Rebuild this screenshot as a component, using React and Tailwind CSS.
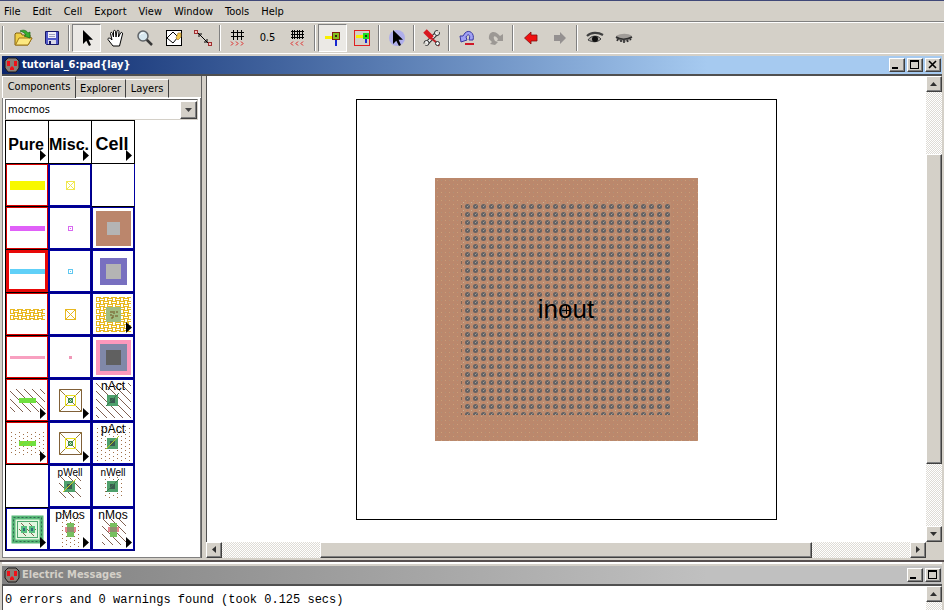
import React from "react";

const MENUS = ["File", "Edit", "Cell", "Export", "View", "Window", "Tools", "Help"];
const RAISED =
  "border border-t-white border-l-white border-r-[#404040] border-b-[#404040] bg-[#d4d0c8] shadow-[inset_-1px_-1px_0_#808080]";
const TRACK =
  "bg-[repeating-conic-gradient(#dedbd5_0_25%,#ffffff_0_50%)] bg-[length:2px_2px]";

function Separator() {
  return <div className="mx-[2px] my-[2px] w-[2px] self-stretch border-l border-[#808080] border-r border-r-white" />;
}

function Tool({ label, pressed, wide, children }) {
  return (
    <button
      type="button"
      aria-label={label}
      className={
        "flex h-[28px] shrink-0 items-center justify-center " +
        (wide ? "w-[31px] " : "w-[29px] ") +
        (pressed
          ? "border border-t-[#808080] border-l-[#808080] border-r-white border-b-white bg-[#ebe9e5]"
          : "")
      }
    >
      {children}
    </button>
  );
}

function Icon({ children }) {
  return (
    <svg width="20" height="20" viewBox="0 0 20 20" className="shrink-0" aria-hidden="true">
      {children}
    </svg>
  );
}

function GridIcon({ dense }) {
  const lines = dense ? [4, 6, 9, 11, 14] : [5, 9, 13];
  const rows = dense ? [3, 6, 9] : [4, 8];
  const chevron = dense ? "l-2 2 l2 2" : "l2 2 l-2 2";
  return (
    <Icon>
      <g fill="#000">
        {lines.map((x) => (
          <rect key={x} x={x} y="2" width="1" height={dense ? 9 : 10} />
        ))}
        {rows.map((y) => (
          <rect key={y} x="3" y={y} width="13" height="1" />
        ))}
      </g>
      <g stroke="#e02020" fill="none">
        {[4, 9, 14].map((x) => (
          <path key={x} d={`M${dense ? x + 1 : x - 1} 13.5${chevron}`} />
        ))}
      </g>
    </Icon>
  );
}

function PointerShape() {
  return <path d="M6 2V16L9.3 12.8L12 18L14 17L11.6 11.8H16Z" fill="#000" />;
}

function OutletLogo() {
  return (
    <svg width="16" height="16" viewBox="0 0 16 16" className="shrink-0" aria-hidden="true">
      <path d="M4 1H12L15 4V11L12 15H4L1 11V4Z" fill="#8a8078" stroke="#1a1a1a" />
      <rect x="3" y="4" width="3" height="5" fill="#f01018" />
      <rect x="10" y="4" width="3" height="5" fill="#f01018" />
      <path d="M6 13V11L8 9L10 11V13Z" fill="#f01018" />
    </svg>
  );
}

function WindowButton({ label, children }) {
  return (
    <button type="button" aria-label={label} className={"h-[14px] w-[16px] " + RAISED}>
      <svg width="14" height="12" viewBox="0 0 14 12" aria-hidden="true">
        {children}
      </svg>
    </button>
  );
}

function Minimize() {
  return (
    <WindowButton label="Minimize">
      <rect x="2" y="8" width="6" height="2" />
    </WindowButton>
  );
}

function Maximize() {
  return (
    <WindowButton label="Maximize">
      <path d="M2 1H11V10H2ZM3 3V9H10V3Z" fillRule="evenodd" />
    </WindowButton>
  );
}

const ARROWS = {
  up: "M3 9H10L6.5 5Z",
  down: "M3 5H10L6.5 9Z",
  left: "M9 3V10L5 6.5Z",
  right: "M5 3V10L9 6.5Z",
};

function ArrowButton({ dir, label }) {
  return (
    <button type="button" aria-label={label} className={"h-[16px] w-[16px] shrink-0 " + RAISED}>
      <svg width="14" height="14" viewBox="0 0 14 14" aria-hidden="true">
        <path d={ARROWS[dir]} fill="#303030" />
      </svg>
    </button>
  );
}

/* ---- palette drawings, each on a 42 x 42 field ---- */

function Label({ size = 12, children }) {
  return (
    <text x="21" y="11" textAnchor="middle" fontSize={size} fill="#000">
      {children}
    </text>
  );
}

function Flyout() {
  return <path d="M34 29V40L40 34.5Z" fill="#000" />;
}

function Arc({ y, h, color }) {
  return <rect x="4" y={y} width="35" height={h} fill={color} />;
}

function Pin({ at, size, color, cross }) {
  const end = at + size;
  return (
    <g stroke={color} fill="none">
      <rect x={at + 0.5} y={at + 0.5} width={size - 1} height={size - 1} />
      {cross ? (
        <path d={`M${at} ${at}L${end} ${end}M${end} ${at}L${at} ${end}`} />
      ) : (
        <rect x={at + 2} y={at + 2} width="1" height="1" stroke="none" fill={color} />
      )}
    </g>
  );
}

function Nested({ boxes }) {
  return boxes.map(([at, size, color]) => (
    <rect key={at} x={at} y={at} width={size} height={size} fill={color} />
  ));
}

function Fill({ id, x = 4, y = 4, w = 35, h = 35 }) {
  return <rect x={x} y={y} width={w} height={h} fill={`url(#${id})`} />;
}

function Contact({ stripe }) {
  return (
    <g>
      <rect x="15" y="16" width="11" height="11" fill="#4fa06c" />
      <rect x="18" y="19" width="5" height="5" fill="#3a5a50" />
      <path d="M14 27L27 14" stroke={stripe} />
    </g>
  );
}

function WellPin() {
  return (
    <g fill="none">
      <rect x="10.5" y="10.5" width="22" height="22" stroke="#806038" />
      <path d="M10 10L33 33M33 10L10 33" stroke="#9c8040" />
      <rect x="16.5" y="16.5" width="10" height="10" stroke="#e8e020" />
      <rect x="19.5" y="19.5" width="4" height="4" stroke="#408850" fill="#c8e8b0" />
      <path d="M19 19L24 24M24 19L19 24" stroke="#408850" />
    </g>
  );
}

function Transistor() {
  return (
    <g>
      <rect x="18" y="15" width="7" height="14" fill="#78c060" />
      <rect x="16" y="19" width="11" height="5" fill="#e88890" />
      <rect x="18" y="19" width="7" height="5" fill="#909070" />
    </g>
  );
}

const poly = "#e8b820";

const CELLS = [
  { kind: "head", name: "Pure", size: 16 },
  { kind: "head", name: "Misc.", size: 16 },
  { kind: "head", name: "Cell", size: 18 },
  { kind: "arc", name: "Metal-3 arc", art: <Arc y={17} h={9} color="#f8f800" /> },
  { kind: "node", name: "Metal-3 pin", art: <Pin at={17} size={9} color="#f0e850" cross /> },
  { kind: "none", name: "" },
  { kind: "arc", name: "Metal-2 arc", art: <Arc y={19} h={5} color="#e060f8" /> },
  { kind: "node", name: "Metal-2 pin", art: <Pin at={19} size={5} color="#d868f0" /> },
  { kind: "node", name: "Metal contact", art: <Nested boxes={[[4, 35, "#bb866c"], [15, 13, "#b4b4b4"]]} /> },
  { kind: "current", name: "Metal-1 arc", art: <Arc y={19} h={5} color="#60d0f8" /> },
  { kind: "node", name: "Metal-1 pin", art: <Pin at={19} size={5} color="#60c8f0" /> },
  { kind: "node", name: "Metal-2 contact", art: <Nested boxes={[[8, 27, "#7870c0"], [14, 15, "#b4b4b4"]]} /> },
  { kind: "arc", name: "Poly arc", art: <Fill id="brick" y={16} h={11} /> },
  { kind: "node", name: "Poly pin", art: <Pin at={16} size={11} color={poly} cross /> },
  {
    kind: "node",
    name: "Poly contact",
    art: (
      <>
        <Fill id="brick" />
        <rect x="14" y="14" width="15" height="15" fill="#a0bc80" />
        <path d="M18 19H21M22 18V21M24 19H26M18 22H20M21 22V25M23 23H26M19 25H21" stroke="#705020" />
        <Flyout />
      </>
    ),
  },
  { kind: "arc", name: "Poly-2 arc", art: <Arc y={20} h={3} color="#f8a0c0" /> },
  { kind: "node", name: "Poly-2 pin", art: <rect x="20" y="20" width="3" height="3" fill="#f098b8" /> },
  {
    kind: "node",
    name: "Poly-2 contact",
    art: <Nested boxes={[[4, 35, "#fc98bc"], [8, 27, "#8088a8"], [14, 15, "#606060"]]} />,
  },
  {
    kind: "arc",
    name: "N active arc",
    art: (
      <>
        <Fill id="diag" y={10} h={23} />
        <rect x="13" y="19" width="17" height="5" fill="#70e040" />
        <Flyout />
      </>
    ),
  },
  { kind: "node", name: "N active pin", art: <><WellPin /><Flyout /></> },
  { kind: "node", name: "N active contact", art: <><Fill id="diag" /><Contact stripe="#3a7850" /><Label>nAct</Label></> },
  {
    kind: "arc",
    name: "P active arc",
    art: (
      <>
        <Fill id="dots" y={10} h={23} />
        <rect x="13" y="19" width="17" height="5" fill="#70e040" />
        <path d="M13 24L18 19M21 24L26 19" stroke="#a0d020" />
        <Flyout />
      </>
    ),
  },
  { kind: "node", name: "P active pin", art: <><WellPin /><Flyout /></> },
  { kind: "node", name: "P active contact", art: <><Fill id="dots" /><Contact stripe="#b0c820" /><Label>pAct</Label></> },
  { kind: "none", name: "" },
  {
    kind: "node",
    name: "P well contact",
    art: <><Fill id="diag" x={10} y={11} w={22} h={22} /><Contact stripe="#d0d020" /><Label size={10}>pWell</Label></>,
  },
  {
    kind: "node",
    name: "N well contact",
    art: <><Fill id="dots" x={10} y={11} w={22} h={22} /><Contact stripe="#3a7850" /><Label size={10}>nWell</Label></>,
  },
  {
    kind: "node",
    name: "NPN transistor",
    art: (
      <>
        <rect x="7.5" y="9.5" width="28" height="24" fill="#e4f8e0" stroke="#58b878" strokeWidth="4" />
        <rect x="7.5" y="9.5" width="28" height="24" fill="none" stroke="#306850" strokeDasharray="2 2" />
        <rect x="11.5" y="13.5" width="20" height="16" fill="none" stroke="#50a870" />
        <Fill id="diag" x={13} y={15} w={17} h={13} />
        <rect x="15" y="18" width="6" height="7" fill="#58c080" />
        <rect x="23" y="18" width="6" height="7" fill="#58c080" />
        <rect x="17" y="20" width="2" height="3" fill="#306878" />
        <rect x="25" y="20" width="2" height="3" fill="#306878" />
        <Flyout />
      </>
    ),
  },
  { kind: "node", name: "P transistor", art: <><Fill id="dots" x={10} w={22} /><Transistor /><Label>pMos</Label><Flyout /></> },
  { kind: "node", name: "N transistor", art: <><Fill id="diag" x={10} y={11} w={24} h={26} /><Transistor /><Label>nMos</Label><Flyout /></> },
];

const EDGE = {
  head: "",
  none: "",
  arc: "border border-[#d80000]",
  node: "border border-[#0000a0]",
  current: "border-[3px] border-[#e80808]",
};

const OUTER = {
  head: "border-black",
  none: "border-r-[#0000a0] border-b-black",
  arc: "border-r-[#0000a0] border-b-black",
  node: "border-[#000080]",
  current: "border-r-[#0000a0] border-b-black",
};

function PaletteCell({ cell }) {
  const drawing =
    cell.kind === "head" ? (
      <>
        <text x="20" y="29" textAnchor="middle" fontSize={cell.size} fontWeight="bold">
          {cell.name}
        </text>
        <Flyout />
      </>
    ) : (
      cell.art
    );
  return (
    <button
      type="button"
      aria-label={cell.name || "Empty"}
      className={"grid h-[43px] w-[43px] border-r border-b bg-white " + OUTER[cell.kind]}
    >
      <svg
        width="42"
        height="42"
        viewBox="0 0 42 42"
        className="col-start-1 row-start-1 font-['Liberation_Sans',Arial,sans-serif]"
      >
        {drawing}
      </svg>
      <span className={"col-start-1 row-start-1 h-[42px] w-[42px] " + EDGE[cell.kind]} />
    </button>
  );
}

function PatternDefs() {
  return (
    <svg width="0" height="0" className="absolute" aria-hidden="true">
      <defs>
        <pattern id="diag" width="8" height="8" patternUnits="userSpaceOnUse">
          <path d="M-1 -1L9 9M7 -1L9 1M-1 7L1 9" stroke="#806050" strokeWidth="1" />
        </pattern>
        <pattern id="dots" width="8" height="4" patternUnits="userSpaceOnUse">
          <rect x="1" y="0" width="1" height="1" fill="#a07048" />
          <rect x="5" y="2" width="1" height="1" fill="#a07048" />
        </pattern>
        <pattern id="brick" x="4" y="4" width="8" height="6" patternUnits="userSpaceOnUse">
          <path d="M0.5 0V5M3.5 0V5M0 0.5H4M0 4.5H4M4.5 3V6M7.5 3V6M4.5 0V2M7.5 0V2M4 1.5H8M4 3.5H8" stroke={poly} fill="none" />
        </pattern>
        <pattern id="weave" width="8" height="8" patternUnits="userSpaceOnUse">
          <rect width="8" height="8" fill="#bb886c" />
          <rect x="1" y="1" width="1" height="1" fill="#cca078" />
          <rect x="5" y="5" width="1" height="1" fill="#cca078" />
          <rect x="5" y="1" width="1" height="1" fill="#b09078" />
          <rect x="1" y="5" width="1" height="1" fill="#b09078" />
        </pattern>
        <pattern id="vias" x="107" y="103" width="8" height="8" patternUnits="userSpaceOnUse">
          <rect width="8" height="8" fill="#bc8c70" />
          <rect x="0" y="0" width="1" height="1" fill="#c8b498" />
          <rect x="0" y="4" width="1" height="1" fill="#c88058" />
          <rect x="4" y="0" width="1" height="1" fill="#c88058" />
          <circle cx="4.5" cy="4.5" r="2.5" fill="#646264" />
          <rect x="4" y="4" width="1" height="1" fill="#a8a498" />
          <rect x="5" y="3" width="1" height="1" fill="#88847c" />
        </pattern>
      </defs>
    </svg>
  );
}

function PadLayout() {
  return (
    <svg width="421" height="421" viewBox="0 0 421 421" className="shrink-0 font-['Liberation_Sans',Arial,sans-serif]">
      <rect x="0.5" y="0.5" width="420" height="420" fill="none" stroke="#000" />
      <rect x="79" y="79" width="263" height="263" fill="url(#weave)" />
      <rect x="107" y="103" width="208" height="213" fill="url(#vias)" />
      <path d="M105.5 106V316" stroke="#806858" strokeDasharray="3 5" />
      <text x="210" y="219" textAnchor="middle" fontSize="26" fill="#000">
        inout
      </text>
      <path d="M206 211.5H214M210.5 207V215" stroke="#000" />
    </svg>
  );
}

function TitleBar({ children, active, buttons }) {
  return (
    <div
      className={
        "flex h-[18px] shrink-0 items-center pl-[2px] pr-px text-[11px] font-bold " +
        (active
          ? "bg-linear-to-r from-[#0a246a] to-[#a6caf0] to-75% text-white"
          : "bg-linear-to-r from-[#808080] to-[#c0c0c0] to-75% text-[#d4d0c8]")
      }
    >
      <OutletLogo />
      <h2 className="ml-[2px] flex-1 leading-[16px]">{children}</h2>
      <div className="flex gap-[2px]">{buttons}</div>
    </div>
  );
}

export default function App() {
  return (
    <div className="flex h-screen flex-col overflow-hidden bg-[#d4d0c8] font-['DejaVu_Sans_Condensed','DejaVu_Sans',sans-serif] text-[11px] leading-[14px] text-black">
      <PatternDefs />
      <nav className="flex h-[22px] shrink-0 items-center gap-[12px] border-t border-b border-t-[#404878] border-b-[#808080] px-1 pt-px">
        {MENUS.map((m) => (
          <button type="button" key={m}>
            {m}
          </button>
        ))}
      </nav>

      <div className="flex h-[32px] shrink-0 items-center border-t border-b border-white" role="toolbar">
        <div className="mr-[4px] ml-[2px] h-[24px] w-[2px] border-l border-r border-l-[#808080] border-r-white" />
        <Tool label="Open">
          <Icon>
            <path d="M2 8V17H15L19 10H17V7H9L8 5H3L2 6Z" fill="#f0d048" stroke="#806010" />
            <path d="M2.5 17L6 10H19L15 17Z" fill="#fce880" stroke="#a07818" />
            <path d="M7 3C11 1 14 3 15 5L17 4V10L11 8L13 7C12 5 10 4 7 3Z" fill="#38b030" stroke="#186818" strokeWidth=".7" />
          </Icon>
        </Tool>
        <Tool label="Save">
          <Icon>
            <path d="M3.5 3.5H16.5V16.5H4.5L3.5 15.5Z" fill="#5058c8" stroke="#181868" />
            <rect x="6" y="4" width="8" height="6" fill="#f0f0f8" />
            <path d="M7 6.5H13M7 8.5H13" stroke="#a0a0c0" />
            <rect x="6" y="12" width="8" height="4" fill="#d8d8e8" />
            <rect x="7" y="13" width="2" height="3" fill="#181868" />
          </Icon>
        </Tool>
        <Separator />
        <Tool label="Select" pressed>
          <Icon><PointerShape /></Icon>
        </Tool>
        <Tool label="Pan">
          <Icon>
            <path
              d="M7 18L2 11.5C1.5 10 3.5 9.5 5 11L6 12L4.5 5.5C4.5 4 6 4 6.5 5.5L7.5 9L7.5 3.5C7.5 2 9.5 2 9.5 3.5L10 9L11 3C11.5 1.8 13 2.2 13 3.5L12.5 9L14.5 5C15.5 3.8 16.8 4.6 16.5 6L15 12L13.5 18Z"
              fill="#fff" stroke="#000"
            />
          </Icon>
        </Tool>
        <Tool label="Zoom">
          <Icon>
            <path d="M11 11L17 17" stroke="#383838" strokeWidth="2.5" />
            <circle cx="8" cy="8" r="5" fill="#d8e8f0" stroke="#606468" strokeWidth="1.5" />
            <path d="M5 7C6 5 8 5 9 5" stroke="#fff" fill="none" />
          </Icon>
        </Tool>
        <Tool label="Outline edit">
          <Icon>
            <rect x="2.5" y="2.5" width="15" height="15" fill="#fff" stroke="#000" />
            <path d="M9 4L14 9L9 15L3 10Z" fill="none" stroke="#000" />
            <path d="M12 10L14 5H17V9L14 12Z" fill="#f0c850" stroke="#a88030" strokeWidth=".7" />
          </Icon>
        </Tool>
        <Tool label="Measure">
          <Icon>
            <path d="M4 4L16 16M6 9V6H9M11 14H14V11" fill="none" stroke="#000" />
            <rect x="1.5" y="2.5" width="3" height="3" fill="#f0c0c0" stroke="#a03030" />
            <rect x="15.5" y="14.5" width="3" height="3" fill="#f0c0c0" stroke="#a03030" />
          </Icon>
        </Tool>
        <Separator />
        <Tool label="Grid larger"><GridIcon /></Tool>
        <Tool label="Grid alignment" wide>0.5</Tool>
        <Tool label="Grid smaller"><GridIcon dense /></Tool>
        <Separator />
        <Tool label="Select objects" pressed>
          <Icon>
            <rect x="2" y="8" width="8" height="3" fill="#f8f000" />
            <rect x="12" y="12" width="2" height="6" fill="#1828d0" />
            <rect x="9.5" y="4.5" width="7" height="7" fill="#80c020" stroke="#802010" />
            <rect x="12" y="7" width="2" height="2" fill="#302010" />
          </Icon>
        </Tool>
        <Tool label="Select area">
          <Icon>
            <rect x="2.5" y="2.5" width="15" height="15" fill="none" stroke="#e02020" />
            <rect x="4" y="7" width="8" height="3" fill="#f8f000" />
            <rect x="13" y="10" width="2" height="5" fill="#1828d0" />
            <rect x="11" y="5" width="6" height="6" fill="#20e020" />
            <rect x="13" y="7" width="2" height="2" fill="#104010" />
          </Icon>
        </Tool>
        <Separator />
        <Tool label="Toggle special select">
          <Icon>
            <circle cx="10" cy="10" r="8" fill="#a8a8f0" opacity=".85" />
            <PointerShape />
          </Icon>
        </Tool>
        <Separator />
        <Tool label="Preferences">
          <Icon>
            <path d="M5 15L15 5" stroke="#303030" strokeWidth="4" />
            <path d="M5 15L15 5" stroke="#f4f4f4" strokeWidth="2" />
            <circle cx="4.5" cy="15" r="2.5" fill="#f4f4f4" stroke="#303030" />
            <circle cx="15" cy="5" r="2.5" fill="#f4f4f4" stroke="#303030" />
            <path d="M15 5L19 1M4.5 15L1 18" stroke="#d4d0c8" strokeWidth="2" />
            <path d="M3 3L10 10" stroke="#d81820" strokeWidth="5" />
            <path d="M9 10L15 15L17 18" stroke="#c02028" strokeWidth="2" fill="none" />
            <circle cx="15.5" cy="15.5" r="2" fill="#f4f4f4" stroke="#303030" />
          </Icon>
        </Tool>
        <Separator />
        <Tool label="Undo">
          <Icon>
            <path d="M16 12C18 5 12 1 8 5L6 8H3L4 14L10 12L9 9C11 5 14 7 12 12Z" fill="#a0a0f4" stroke="#3838a0" />
            <rect x="8" y="15" width="9" height="2" fill="#d01828" />
          </Icon>
        </Tool>
        <Tool label="Redo">
          <Icon>
            <path d="M3 11C2 4 8 2 12 6L14 8L17 6V13H11L12 11C9 7 7 8 8 11L9 13L12 14L9 17L4 16L6 14Z" fill="#9c9894" />
          </Icon>
        </Tool>
        <Separator />
        <Tool label="Back">
          <Icon>
            <path d="M3.5 10L10 4V7H16V13H10V16Z" fill="#f01010" stroke="#801010" strokeWidth=".8" />
          </Icon>
        </Tool>
        <Tool label="Forward">
          <Icon>
            <path d="M16 10L10 4V7H4V13H10V16Z" fill="#949090" />
          </Icon>
        </Tool>
        <Separator />
        <Tool label="Expand">
          <Icon>
            <path d="M2 8C6 4 13 4 18 7" stroke="#404040" strokeWidth="2.2" fill="none" />
            <path d="M3 12C6 7 13 7 16 11C12 15 7 14 3 12Z" fill="#a8a4a0" stroke="#404040" />
            <circle cx="10" cy="11" r="3" fill="#101010" />
          </Icon>
        </Tool>
        <Tool label="Unexpand">
          <Icon>
            <path d="M2 8C7 5 14 5 18 8L17 12C12 15 6 14 2 11Z" fill="#a09c98" />
            <path d="M2 9C6 12 13 12 18 9M4 11L3 13M7 12V14M10 12V15M13 12L14 14M16 11L17 12" stroke="#303030" strokeWidth="1.6" fill="none" />
          </Icon>
        </Tool>
      </div>

      <section className="flex min-h-0 flex-1 flex-col px-[2px] pt-[2px] pb-[2px]">
        <TitleBar
          active
          buttons={
            <>
              <Minimize />
              <Maximize />
              <WindowButton label="Close">
                <path d="M3 2L10 9M10 2L3 9" stroke="#000" strokeWidth="1.6" />
              </WindowButton>
            </>
          }
        >
          tutorial_6:pad{"{lay}"}
        </TitleBar>

        <div className="flex min-h-0 flex-1 border-t-2 border-[#505050]">
          <aside className="flex w-[200px] shrink-0 flex-col border-r border-[#606060]">
            <div className="flex h-[22px] shrink-0 items-end" role="tablist">
              <button type="button" role="tab" aria-selected="true" className="h-[22px] w-[74px] border-t border-r border-l border-t-white border-l-white border-r-[#404040] pb-[2px]">
                Components
              </button>
              <button type="button" role="tab" aria-selected="false" className="h-[19px] w-[50px] border-t border-r border-b border-t-white border-b-white border-r-[#404040]">
                Explorer
              </button>
              <button type="button" role="tab" aria-selected="false" className="h-[19px] w-[43px] border-t border-r border-b border-t-white border-b-white border-r-[#404040]">
                Layers
              </button>
              <div className="flex-1 border-b border-white" />
            </div>
            <div className="flex min-h-0 flex-1 flex-col border-r border-b border-l border-[#808080] bg-white pl-[2px]">
              <div className="mr-[2px] mt-px grid h-[21px] shrink-0 border border-t-[#606060] border-l-[#606060] border-r-[#d4d0c8] border-b-[#d4d0c8]">
                <select aria-label="Technology" defaultValue="mocmos" className="col-start-1 row-start-1 h-[19px] w-full appearance-none bg-white pl-[2px]">
                  <option>mocmos</option>
                </select>
                <span className={"pointer-events-none col-start-1 row-start-1 h-[18px] w-[17px] self-center justify-self-end " + RAISED}>
                  <svg width="15" height="16" viewBox="0 0 15 16" aria-hidden="true">
                    <path d="M4 6H11L7.5 10Z" fill="#404040" />
                  </svg>
                </span>
              </div>
              <div className="grid w-fit grid-cols-[repeat(3,43px)] border-t border-l border-black">
                {CELLS.map((c, i) => (
                  <PaletteCell key={i} cell={c} />
                ))}
              </div>
            </div>
          </aside>

          <div className="ml-[4px] flex min-w-0 flex-1 flex-col">
            <div className="flex min-h-0 flex-1">
              <main className="flex min-w-0 flex-1 items-center justify-center overflow-hidden border-l border-[#505050] bg-white">
                <PadLayout />
              </main>
              <div className={"flex w-[16px] shrink-0 flex-col " + TRACK}>
                <ArrowButton dir="up" label="Scroll up" />
                <div className="flex-1" />
                <div className={"flex-[5] " + RAISED} />
                <div className="flex-1" />
                <ArrowButton dir="down" label="Scroll down" />
              </div>
            </div>
            <div className="flex h-[16px] shrink-0">
              <div className={"flex min-w-0 flex-1 " + TRACK}>
                <ArrowButton dir="left" label="Scroll left" />
                <div className="flex-1" />
                <div className={"flex-[5] " + RAISED} />
                <div className="flex-1" />
                <ArrowButton dir="right" label="Scroll right" />
              </div>
              <div className="w-[16px]" />
            </div>
          </div>
        </div>
      </section>

      <section className="flex h-[50px] shrink-0 flex-col border-t-2 border-[#585050] px-[2px]">
        <div className="mb-[2px] h-[2px] shrink-0 bg-white" />
        <TitleBar buttons={<><Minimize /><Maximize /></>}>Electric Messages</TitleBar>
        <div className="flex min-h-0 flex-1 border-t-2 border-[#505050] bg-white">
          <div className="flex flex-1 flex-col justify-end overflow-hidden border-l border-[#505050] pb-[2px] pl-[2px] font-['Liberation_Mono','Courier_New',monospace] text-[12px] leading-[15px] whitespace-pre">
            <p>0 errors and 0 warnings found (took 0.125 secs)</p>
          </div>
          <div className={"w-[16px] shrink-0 " + TRACK}>
            <ArrowButton dir="up" label="Scroll messages up" />
          </div>
        </div>
      </section>
    </div>
  );
}
